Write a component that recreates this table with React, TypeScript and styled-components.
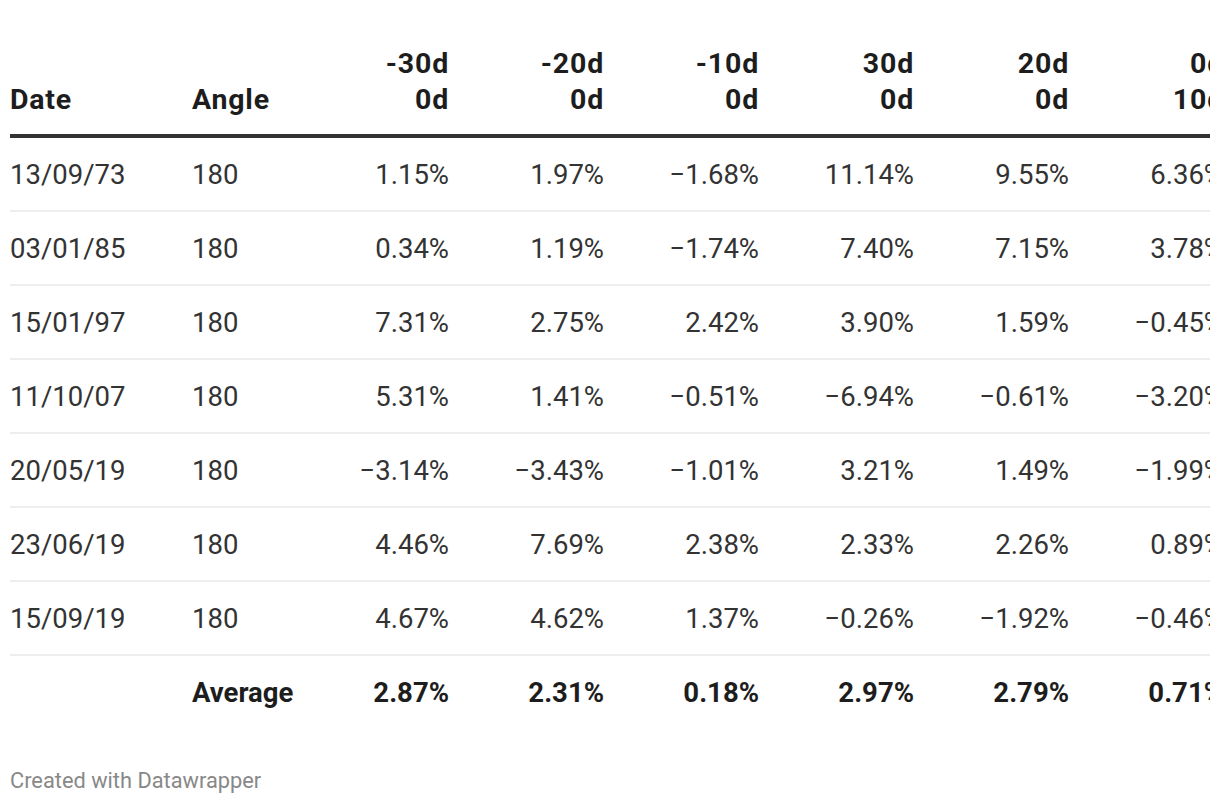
import React from 'react';
import styled, { createGlobalStyle } from 'styled-components';

const GlobalStyle = createGlobalStyle`
  html, body {
    margin: 0;
    padding: 0;
    background: #ffffff;
  }
  body {
    font-family: Roboto, "Liberation Sans", sans-serif;
    color: #333333;
  }
`;

const Page = styled.div`
  padding: 46px 10px 0 10px;
  width: 1200px;
`;

const TableClip = styled.div`
  width: 1200px;
  overflow: hidden;
`;

const Table = styled.table`
  border-collapse: collapse;
  table-layout: fixed;
  width: 1214px;
  font-size: 27.5px;
  line-height: 36px;
`;

const HeadCell = styled.th<{ $align: 'left' | 'right' }>`
  text-align: ${p => p.$align};
  vertical-align: bottom;
  font-size: 28.5px;
  font-weight: 700;
  letter-spacing: 0.8px;
  color: #1d1d1d;
  padding: 0 0 16px 0;
  border-bottom: 4px solid #333333;
  white-space: nowrap;
`;

const Row = styled.tr<{ $last?: boolean }>`
  border-bottom: ${p => (p.$last ? 'none' : '2px solid #eeeeee')};
`;

const Cell = styled.td<{ $align: 'left' | 'right'; $bold?: boolean }>`
  text-align: ${p => p.$align};
  font-weight: ${p => (p.$bold ? 700 : 400)};
  color: ${p => (p.$bold ? '#1d1d1d' : '#333333')};
  padding: 19px 0 17px 0;
  white-space: nowrap;
`;

const Footer = styled.div`
  margin-top: 39px;
  font-size: 21.8px;
  line-height: 28px;
  color: #888888;
`;

const headers = ['-30d\n0d', '-20d\n0d', '-10d\n0d', '30d\n0d', '20d\n0d', '0d\n10d'];

const rows: [string, string, string[]][] = [
  ['13/09/73', '180', ['1.15%', '1.97%', '−1.68%', '11.14%', '9.55%', '6.36%']],
  ['03/01/85', '180', ['0.34%', '1.19%', '−1.74%', '7.40%', '7.15%', '3.78%']],
  ['15/01/97', '180', ['7.31%', '2.75%', '2.42%', '3.90%', '1.59%', '−0.45%']],
  ['11/10/07', '180', ['5.31%', '1.41%', '−0.51%', '−6.94%', '−0.61%', '−3.20%']],
  ['20/05/19', '180', ['−3.14%', '−3.43%', '−1.01%', '3.21%', '1.49%', '−1.99%']],
  ['23/06/19', '180', ['4.46%', '7.69%', '2.38%', '2.33%', '2.26%', '0.89%']],
  ['15/09/19', '180', ['4.67%', '4.62%', '1.37%', '−0.26%', '−1.92%', '−0.46%']],
];

const averages = ['2.87%', '2.31%', '0.18%', '2.97%', '2.79%', '0.71%'];

export default function App() {
  return (
    <Page>
      <GlobalStyle />
      <TableClip>
        <Table>
          <colgroup>
            <col style={{ width: 182 }} />
            <col style={{ width: 102 }} />
            {headers.map((_, i) => (
              <col key={i} style={{ width: 155 }} />
            ))}
          </colgroup>
          <thead>
            <tr>
              <HeadCell $align="left">Date</HeadCell>
              <HeadCell $align="left">Angle</HeadCell>
              {headers.map(h => {
                const [a, b] = h.split('\n');
                return (
                  <HeadCell key={h} $align="right">
                    {a}
                    <br />
                    {b}
                  </HeadCell>
                );
              })}
            </tr>
          </thead>
          <tbody>
            {rows.map(([date, angle, values]) => (
              <Row key={date}>
                <Cell $align="left">{date}</Cell>
                <Cell $align="left">{angle}</Cell>
                {values.map((v, i) => (
                  <Cell key={i} $align="right">{v}</Cell>
                ))}
              </Row>
            ))}
            <Row $last>
              <Cell $align="left" />
              <Cell $align="left" $bold>Average</Cell>
              {averages.map((v, i) => (
                <Cell key={i} $align="right" $bold>{v}</Cell>
              ))}
            </Row>
          </tbody>
        </Table>
      </TableClip>
      <Footer>Created with Datawrapper</Footer>
    </Page>
  );
}
